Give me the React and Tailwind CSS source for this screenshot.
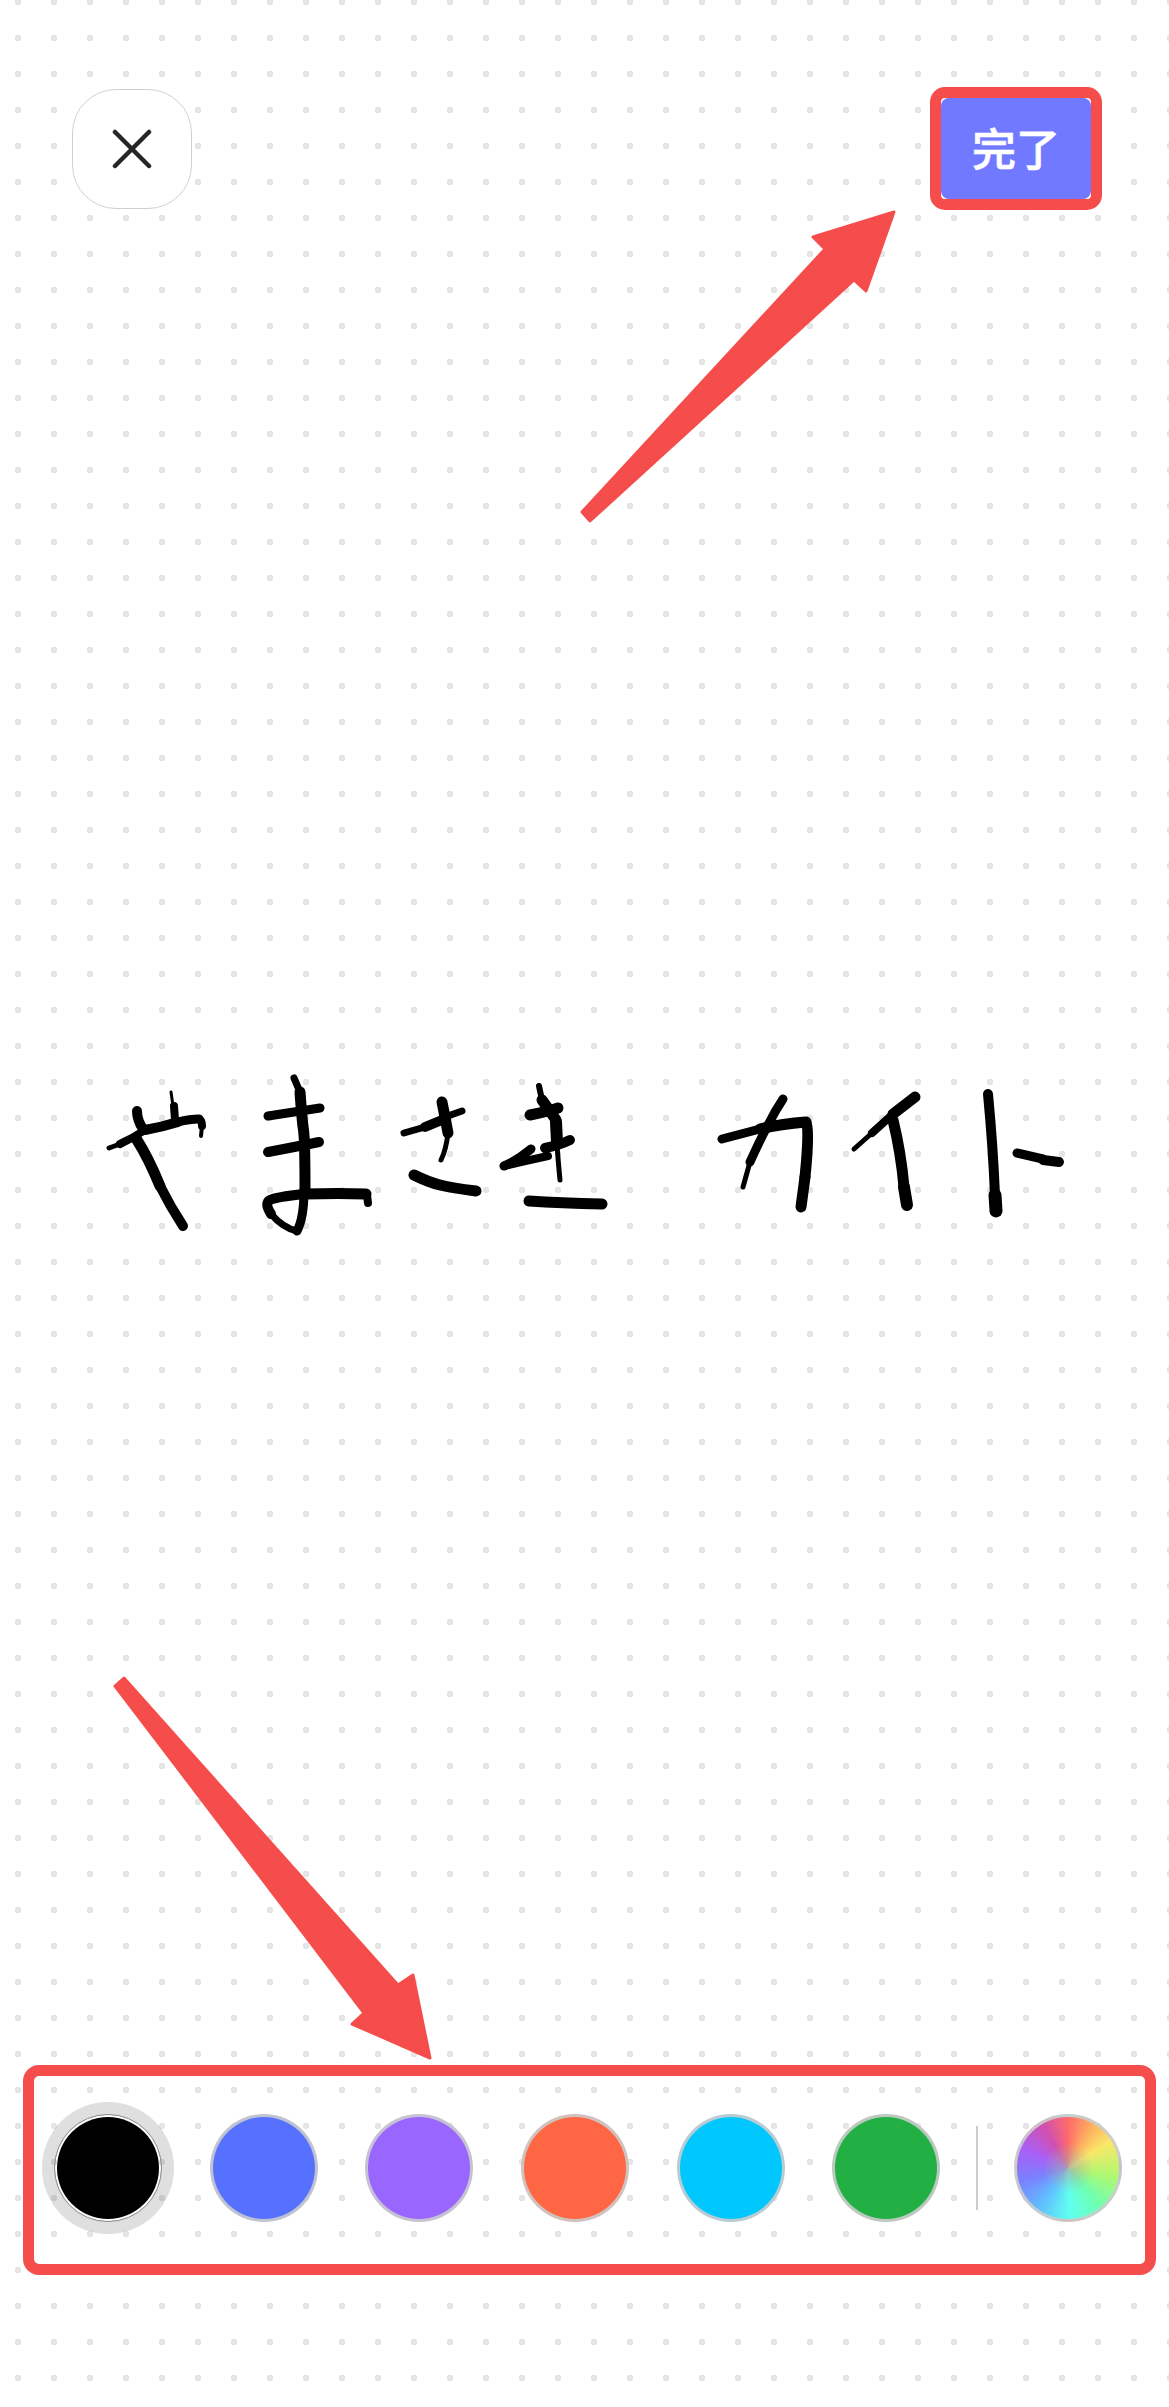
const colors = ["#5670ff", "#9966ff", "#ff6644", "#00c8ff", "#22b045"];

// pen strokes of the signature, page coordinates: [width, x, y, x, y, ...]
const inkStrokes = [
  // や
  [5, 109, 1148, 120, 1144],
  [8, 120, 1144, 133, 1138, 145, 1130],
  [10, 145, 1130, 162, 1127, 178, 1122],
  [9, 178, 1122, 190, 1119, 199, 1119],
  [8, 199, 1119, 202, 1120, 202, 1126],
  [4, 202, 1126, 201, 1136],
  [10, 137, 1111, 137, 1120, 143, 1129],
  [8, 174, 1106, 175, 1120],
  [3, 171, 1092, 173, 1106],
  [11, 137, 1140, 148, 1157, 160, 1186],
  [10, 160, 1186, 170, 1206, 183, 1226],
  // ま
  [7, 294, 1078, 300, 1092],
  [11, 300, 1092, 302, 1120, 305, 1140, 305, 1190],
  [9, 304, 1190, 304, 1218, 297, 1231],
  [7, 297, 1231, 283, 1228, 271, 1214],
  [10, 271, 1214, 264, 1203, 276, 1197, 304, 1194],
  [11, 304, 1194, 340, 1193, 366, 1194],
  [8, 367, 1195, 368, 1203],
  [9, 268, 1116, 300, 1111, 320, 1108],
  [10, 268, 1152, 300, 1146, 319, 1142],
  // さ
  [7, 404, 1133, 425, 1127],
  [10, 425, 1127, 442, 1120],
  [7, 442, 1118, 462, 1111],
  [11, 442, 1102, 445, 1117, 448, 1133],
  [5, 448, 1133, 446, 1150, 441, 1160],
  [11, 414, 1175, 428, 1182, 452, 1188, 476, 1191],
  // き
  [6, 539, 1086, 542, 1100],
  [11, 542, 1100, 552, 1114, 556, 1120],
  [12, 556, 1122, 557, 1142],
  [5, 557, 1144, 558, 1160, 560, 1180],
  [11, 530, 1115, 546, 1112, 558, 1108],
  [9, 504, 1166, 518, 1160, 531, 1149],
  [8, 504, 1166, 525, 1161, 548, 1156],
  [10, 545, 1148, 560, 1145, 570, 1140],
  [11, 529, 1201, 560, 1203, 602, 1204],
  // カ
  [9, 722, 1139, 760, 1129],
  [11, 760, 1129, 780, 1124, 806, 1122],
  [11, 806, 1123, 810, 1128, 805, 1177],
  [11, 805, 1177, 801, 1207],
  [9, 783, 1099, 775, 1111, 768, 1125],
  [9, 768, 1125, 758, 1144, 750, 1162],
  [5, 750, 1162, 743, 1187],
  // イ
  [11, 915, 1097, 893, 1114],
  [8, 893, 1114, 872, 1133],
  [5, 872, 1133, 854, 1149],
  [11, 893, 1120, 901, 1153, 904, 1187],
  [12, 904, 1187, 907, 1205],
  // ト
  [10, 988, 1094, 993, 1147, 995, 1195],
  [13, 995, 1195, 996, 1211],
  [9, 1017, 1153, 1043, 1159],
  [10, 1043, 1160, 1059, 1162],
];

const toPath = (p) => {
  let d = `M${p[0]} ${p[1]}`;
  const n = p.length / 2;
  if (n === 2) return `${d}L${p[2]} ${p[3]}`;
  for (let i = 1; i < n - 1; i++) {
    const nextX = i === n - 2 ? p[2 * n - 2] : (p[2 * i] + p[2 * i + 2]) / 2;
    const nextY = i === n - 2 ? p[2 * n - 1] : (p[2 * i + 1] + p[2 * i + 3]) / 2;
    d += `Q${p[2 * i]} ${p[2 * i + 1]} ${nextX} ${nextY}`;
  }
  return d;
};

const Swatch = ({ color }) => (
  <button
    className="w-[108px] h-[108px] shrink-0 rounded-full border-[3px] border-[rgba(204,204,204,0.9)]"
    style={{ backgroundColor: color }}
  />
);

export default function App() {
  return (
    <div className="relative w-full h-[2407px] flex flex-col bg-white bg-[radial-gradient(circle,#e5e5e5_3px,transparent_3.6px)] bg-[size:36px_36px] bg-[position:0px_-16px] font-['Noto_Sans_CJK_SC','Noto_Sans_CJK_JP',sans-serif]">
      <header className="flex items-center justify-between pt-[87px] pl-[72px] pr-[67px]">
        <button className="w-[120px] h-[120px] flex items-center justify-center bg-white border border-[#d0d0d0] rounded-[44px]">
          <svg width="40" height="40" viewBox="0 0 40 40" fill="none" stroke="#262626" strokeWidth="4.5" strokeLinecap="round">
            <path d="M3 3L37 37M37 3L3 37" />
          </svg>
        </button>
        <div className="w-[172px] h-[123px] bg-white border-[11px] border-[#f54d4b] rounded-[15px]">
          <button className="w-full h-full flex items-center justify-center pb-[4px] bg-[#7079ff] rounded-[8px] text-white text-[44px] font-medium leading-none [-webkit-text-stroke:0.7px_white]">
            完了
          </button>
        </div>
      </header>

      <svg
        className="block w-full flex-1 min-h-0"
        viewBox="0 210 1169 1855"
        fill="none"
        stroke="#000"
        strokeLinecap="round"
        strokeLinejoin="round"
        role="img"
        aria-label="やまさき カイト"
      >
        {inkStrokes.map(([w, ...pts], i) => (
          <path key={i} d={toPath(pts)} strokeWidth={w} />
        ))}
      </svg>

      <div className="ml-[23px] mr-[13px] mb-[132px] h-[210px] flex items-center pl-[20px] pb-[5px] border-[11px] border-[#f54d4b] rounded-[16px]">
        <button className="w-[108px] h-[108px] shrink-0 rounded-full bg-black bg-clip-content p-[2px] border border-[#888888] shadow-[0_0_0_12px_rgba(0,0,0,0.125)]" />
        <div className="flex gap-[47.7px] ml-[47.7px]">
          {colors.map((c) => (
            <Swatch key={c} color={c} />
          ))}
        </div>
        <div className="w-[2px] h-[84px] mx-[36px] bg-[#cccccc]" />
        <button className="w-[108px] h-[108px] shrink-0 rounded-full border-[3px] border-[rgba(204,204,204,0.9)] bg-[radial-gradient(circle,rgba(170,170,170,0.75),transparent_35%),conic-gradient(#ff6b6b_0deg,#ffb060_30deg,#f8e868_58deg,#b0f870_100deg,#70ffb0_140deg,#60fff0_178deg,#60c0ff_215deg,#7a80ff_255deg,#a860f8_292deg,#d050b0_330deg,#ff6b6b_360deg)]" />
      </div>

      {/* annotation arrows on top of the screenshot */}
      <svg className="absolute inset-0 w-full h-full pointer-events-none" viewBox="0 0 1169 2407" fill="#f54d4b" stroke="#f54d4b" strokeWidth="3" strokeLinejoin="round">
        <polygon points="894,212 866,291 854,280 590,521 582,512 825,249 813,237" />
        <polygon points="430,2058 352,2024 364,2013 115,1686 124,1678 398,1985 413,1975" />
      </svg>
    </div>
  );
}
